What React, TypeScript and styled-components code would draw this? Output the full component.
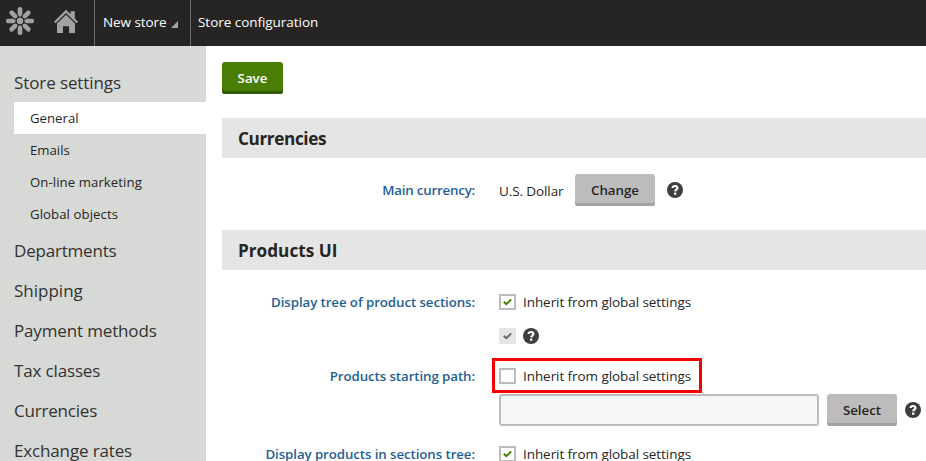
import React from "react";
import styled, { createGlobalStyle, css } from "styled-components";

const GlobalStyle = createGlobalStyle`
  html, body { margin: 0; height: 100%; overflow: hidden; background: #fff; }
  *, *::before, *::after { box-sizing: border-box; }
  body { font-family: "Open Sans", "Noto Sans", sans-serif; font-size: 14px; color: #262524; }
  button { font-family: inherit; }
`;

const Page = styled.div`
  display: flex;
  flex-direction: column;
  width: 926px;
  height: 461px;
  overflow: hidden;
`;

const TopBar = styled.header`
  display: flex;
  flex: none;
  height: 46px;
  background: #262524;
  color: #fff;
`;

const IconStrip = styled.div`
  display: flex;
  width: 95px;
  border-right: 1px solid #6b6a6a;
`;

const Crumb = styled.div<{ $width?: number; $divider?: boolean; $track?: number }>`
  display: flex;
  align-items: center;
  width: ${(p) => (p.$width ? `${p.$width}px` : "auto")};
  padding: 0 0 2px ${(p) => (p.$divider ? 8 : 7)}px;
  font-size: 13.5px;
  letter-spacing: ${(p) => p.$track ?? 0}px;
  white-space: nowrap;
  border-right: ${(p) => (p.$divider ? "1px solid #6b6a6a" : "0")};
`;

const Caret = styled.svg`
  width: 7px;
  height: 7px;
  margin: 5px 0 0 5px;
`;

const Body = styled.div`
  display: flex;
  flex: 1;
  min-height: 0;
`;

const Sidebar = styled.nav`
  flex: none;
  width: 206px;
  padding: 16px 0 0 14px;
  background: #d7d9d6;
  overflow: hidden;
`;

const Group = styled.div<{ $track?: number }>`
  height: 40px;
  line-height: 41px;
  font-size: 17px;
  color: #333231;
  letter-spacing: ${(p) => p.$track ?? 0}px;
  white-space: nowrap;
`;

const Item = styled.div<{ $active?: boolean; $track?: number }>`
  height: 32px;
  padding-left: 16px;
  line-height: 32px;
  font-size: 13.2px;
  letter-spacing: ${(p) => p.$track ?? 0}px;
  white-space: nowrap;
  background: ${(p) => (p.$active ? "#fff" : "transparent")};
`;

const Main = styled.main`
  flex: 1;
  min-width: 0;
  padding: 16px 0 0 16px;
`;

const Button = styled.button<{ $primary?: boolean; $width: number; $track?: number }>`
  flex: none;
  display: block;
  width: ${(p) => p.$width}px;
  height: 32px;
  padding: 0 0 1px;
  border: 0;
  border-radius: 3px;
  font-size: 13.3px;
  font-weight: 600;
  letter-spacing: ${(p) => p.$track ?? 0}px;
  ${(p) =>
    p.$primary
      ? css`
          color: #fff;
          background: #497d04;
          box-shadow: inset 0 -3px 0 #315903;
        `
      : css`
          color: #262524;
          background: #bdbbbb;
          box-shadow: inset 0 -3px 0 #a3a2a2;
        `}
`;

const SectionTitle = styled.h4<{ $track?: number }>`
  height: 40px;
  margin: 24px 0 0;
  padding-left: 16px;
  line-height: 41px;
  font-size: 17.2px;
  font-weight: 700;
  letter-spacing: ${(p) => p.$track ?? 0}px;
  background: #e5e5e5;
`;

const Field = styled.div<{ $top: number }>`
  display: grid;
  grid-template-columns: 253px 1fr;
  column-gap: 24px;
  margin-top: ${(p) => p.$top}px;
`;

const Label = styled.div<{ $height: number; $track?: number }>`
  height: ${(p) => p.$height}px;
  line-height: ${(p) => p.$height + 1}px;
  text-align: right;
  font-size: 13.3px;
  font-weight: 600;
  letter-spacing: ${(p) => p.$track ?? -0.09}px;
  white-space: nowrap;
  color: #1f5f94;
`;

const Controls = styled.div`
  display: flex;
  flex-direction: column;
`;

const Line = styled.div<{ $height: number; $gap: number; $top?: number }>`
  display: flex;
  align-items: center;
  height: ${(p) => p.$height}px;
  gap: ${(p) => p.$gap}px;
  margin-top: ${(p) => p.$top ?? 0}px;
`;

const Highlight = styled.div`
  display: flex;
  align-items: center;
  width: 210px;
  height: 35px;
  margin: -10px 0 1px -7px;
  padding-left: 4px;
  border: 3px solid #f60000;
`;

const Value = styled.span<{ $width?: number; $track?: number; $drop?: number }>`
  flex: none;
  width: ${(p) => (p.$width ? `${p.$width}px` : "auto")};
  padding-top: ${(p) => p.$drop ?? 0}px;
  font-size: 13.5px;
  letter-spacing: ${(p) => p.$track ?? 0}px;
  line-height: 16px;
  white-space: nowrap;
`;

const CheckOption = styled.label`
  display: flex;
  align-items: center;
  gap: 7px;
  height: 16px;
`;

const Box = styled.span<{ $disabled?: boolean }>`
  display: flex;
  flex: none;
  align-items: center;
  justify-content: center;
  width: 17px;
  height: 16px;
  border: ${(p) => (p.$disabled ? "0" : "2px solid #bdbbbb")};
  background: ${(p) => (p.$disabled ? "#e5e5e5" : "#fff")};
`;

const TextInput = styled.input`
  flex: none;
  width: 320px;
  height: 32px;
  border: 2px solid #bdbbbb;
  border-radius: 3px;
  background: #f6f6f6;
  outline: 0;
`;

const HelpMark = styled.svg`
  flex: none;
  width: 16px;
  height: 16px;
`;

const LogoIcon = styled.svg`
  width: 28px;
  height: 28px;
  margin: 7px 0 0 6px;
`;

const HomeIcon = styled.svg`
  width: 24px;
  height: 24px;
  margin: 9px 0 0 20px;
`;

function Help() {
  return (
    <HelpMark viewBox="0 0 16 16">
      <circle cx="8" cy="8" r="8" fill="#403e3d" />
      <path d="M5.6 6C5.7 4.5 6.6 4 8 4c1.5 0 2.4.7 2.4 1.9 0 1.7-2.1 1.8-2.2 3.5" fill="none" stroke="#fff" strokeWidth="2.2" />
      <rect x="7" y="10.6" width="2.4" height="2.1" fill="#fff" />
    </HelpMark>
  );
}

function Checkbox({ checked, disabled }: { checked?: boolean; disabled?: boolean }) {
  return (
    <Box $disabled={disabled}>
      {checked && (
        <svg width="9" height="8" viewBox="0 0 9 8">
          <path d="M.8 3.8 3.3 6.2 8.2 1.4" fill="none" stroke={disabled ? "#6b6a6a" : "#497d04"} strokeWidth="2" />
        </svg>
      )}
    </Box>
  );
}

function Inherit({ checked }: { checked?: boolean }) {
  return (
    <CheckOption>
      <Checkbox checked={checked} />
      <Value $track={-0.07}>Inherit from global settings</Value>
    </CheckOption>
  );
}

const petals = [0, 45, 90, 135, 180, 225, 270, 315];

export default function App() {
  return (
    <>
      <GlobalStyle />
      <Page>
        <TopBar>
          <IconStrip>
            <LogoIcon viewBox="-14 -14 28 28" fill="#a3a2a2">
              <circle r="3.2" />
              {petals.map((angle) => (
                <path
                  key={angle}
                  transform={`rotate(${angle})`}
                  d="M-1.4-4.8-2.3-7V-12.3Q-2.2-14 0-14T2.3-12.3V-7L1.4-4.8Q0-4-1.4-4.8Z"
                />
              ))}
            </LogoIcon>
            <HomeIcon viewBox="0 0 24 24" fill="#a3a2a2">
              <path d="M12 .8 0 12.8l1.6 1.5L12 4l10.4 10.3 1.6-1.5-3.2-3.2V2.2h-4.3V5.3Z" />
              <path d="M12 5.8 3 14.5V24h6v-6.8h6V24h6v-9.5Z" />
            </HomeIcon>
          </IconStrip>
          <Crumb $width={96} $divider $track={-0.08}>
            New store
            <Caret viewBox="0 0 7 7">
              <path d="M7 0v7H0Z" fill="#a3a2a2" />
            </Caret>
          </Crumb>
          <Crumb $track={-0.04}>Store configuration</Crumb>
        </TopBar>
        <Body>
          <Sidebar>
            <Group $track={-0.1}>Store settings</Group>
            <Item $active>General</Item>
            <Item>Emails</Item>
            <Item $track={0.07}>On-line marketing</Item>
            <Item $track={0.07}>Global objects</Item>
            <Group $track={-0.2}>Departments</Group>
            <Group $track={0}>Shipping</Group>
            <Group $track={-0.15}>Payment methods</Group>
            <Group $track={-0.15}>Tax classes</Group>
            <Group $track={-0.2}>Currencies</Group>
            <Group $track={-0.15}>Exchange rates</Group>
          </Sidebar>
          <Main>
            <Button $primary $width={61}>Save</Button>
            <SectionTitle $track={-0.4}>Currencies</SectionTitle>
            <Field $top={16}>
              <Label $height={32} $track={-0.2}>Main currency:</Label>
              <Line $height={32} $gap={12}>
                <Value $width={64} $track={-0.1} $drop={2}>U.S. Dollar</Value>
                <Button $width={80}>Change</Button>
                <Help />
              </Line>
            </Field>
            <SectionTitle>Products UI</SectionTitle>
            <Field $top={24}>
              <Label $height={16}>Display tree of product sections:</Label>
              <Controls>
                <Inherit checked />
                <Line $height={16} $gap={7} $top={18}>
                  <Checkbox checked disabled />
                  <Help />
                </Line>
              </Controls>
            </Field>
            <Field $top={24}>
              <Label $height={16}>Products starting path:</Label>
              <Controls>
                <Highlight>
                  <Inherit />
                </Highlight>
                <Line $height={32} $gap={8}>
                  <TextInput />
                  <Button $width={70}>Select</Button>
                  <Help />
                </Line>
              </Controls>
            </Field>
            <Field $top={20}>
              <Label $height={16}>Display products in sections tree:</Label>
              <Inherit checked />
            </Field>
          </Main>
        </Body>
      </Page>
    </>
  );
}
